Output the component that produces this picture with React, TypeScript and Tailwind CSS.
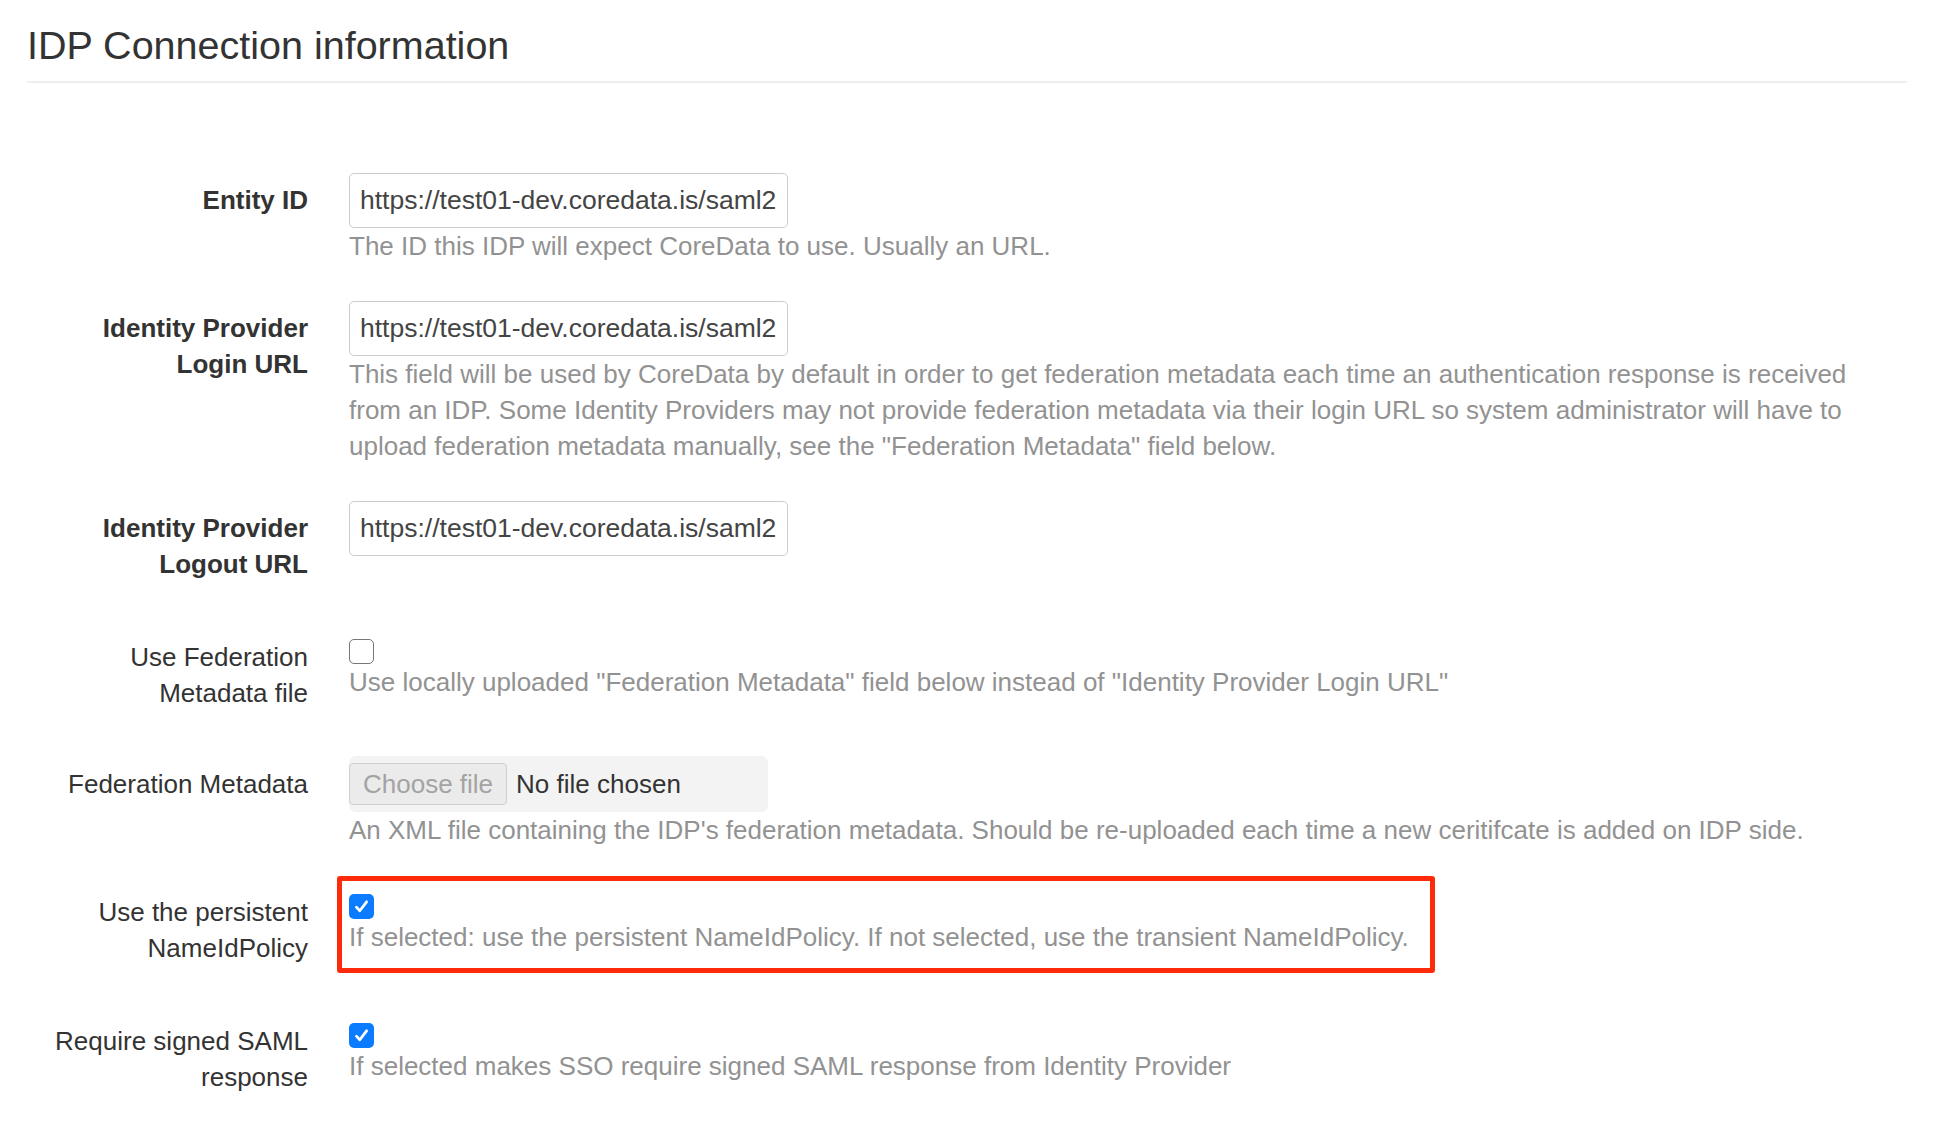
import React from 'react';

const FONT = { fontFamily: '"Liberation Sans", Arial, Helvetica, sans-serif' };

const Checkbox = ({ checked }: { checked?: boolean }) =>
  checked ? (
    <span className="flex h-[25px] w-[25px] items-center justify-center rounded-[5px] bg-[#0b7bff]">
      <svg viewBox="0 0 16 16" className="h-[17px] w-[17px]" fill="none">
        <path d="M3.2 8.6 6.4 12 12.8 3.6" stroke="white" strokeWidth="2.6" strokeLinecap="round" strokeLinejoin="round" />
      </svg>
    </span>
  ) : (
    <span className="block h-[25px] w-[25px] rounded-[5px] border-[1.5px] border-[#777] bg-white" />
  );

const TextInput = ({ value }: { value: string }) => (
  <div className="flex h-[55px] w-[439px] items-center overflow-hidden whitespace-nowrap rounded-[5px] border-[1.5px] border-[#cdcdcd] bg-white pl-[10px] text-[26.5px] text-[#444]">
    {value}
  </div>
);

const Help = ({ children }: { children: React.ReactNode }) => (
  <p className="leading-[36px] text-[#929292]">{children}</p>
);

const Row = ({
  label,
  bold,
  labelPad,
  className,
  children,
}: {
  label: React.ReactNode;
  bold?: boolean;
  labelPad: string;
  className: string;
  children: React.ReactNode;
}) => (
  <div className={`flex ${className}`}>
    <label className={`w-[322px] shrink-0 pr-[41px] text-right leading-[36px] text-[#333] ${bold ? 'font-bold' : ''} ${labelPad}`}>
      {label}
    </label>
    <div className="min-w-0 flex-1">{children}</div>
  </div>
);

export default function App() {
  const url = 'https://test01-dev.coredata.is/saml2';

  return (
    <div className="min-h-screen bg-white pl-[27px] pr-[47px] text-[26px]" style={FONT}>
      <h1 className="border-b-2 border-[#eeeeee] pt-[23px] pb-[14px] text-[39.5px] leading-[44px] text-[#333]">
        IDP Connection information
      </h1>

      <form>
        <Row label="Entity ID" bold labelPad="pt-[9px]" className="mt-[90px]">
          <TextInput value={url} />
          <Help>The ID this IDP will expect CoreData to use. Usually an URL.</Help>
        </Row>

        <Row label={<>Identity Provider<br />Login URL</>} bold labelPad="pt-[9px]" className="mt-[37px]">
          <TextInput value={url} />
          <Help>
            This field will be used by CoreData by default in order to get federation metadata each time an authentication response is received
            <br />
            from an IDP. Some Identity Providers may not provide federation metadata via their login URL so system administrator will have to
            <br />
            upload federation metadata manually, see the "Federation Metadata" field below.
          </Help>
        </Row>

        <Row label={<>Identity Provider<br />Logout URL</>} bold labelPad="pt-[9px]" className="mt-[37px]">
          <TextInput value={url} />
        </Row>

        <Row label={<>Use Federation<br />Metadata file</>} labelPad="pt-0" className="mt-[57px]">
          <Checkbox />
          <Help>Use locally uploaded "Federation Metadata" field below instead of "Identity Provider Login URL"</Help>
        </Row>

        <Row label="Federation Metadata" labelPad="pt-[10px]" className="mt-[45px]">
          <div className="flex h-[56px] w-[419px] items-center rounded-[7px] bg-[#f3f3f3]">
            <span className="flex h-[42px] items-center rounded-[4px] border-[1.5px] border-[#cfcfcf] bg-[#ebebeb] px-[13px] text-[#a3a3a3]">
              Choose file
            </span>
            <span className="pl-[9px] text-[#333]">No file chosen</span>
          </div>
          <Help>An XML file containing the IDP's federation metadata. Should be re-uploaded each time a new ceritifcate is added on IDP side.</Help>
        </Row>

        <Row label={<>Use the persistent<br />NameIdPolicy</>} labelPad="pt-[18px]" className="mt-[28px]">
          <div className="-ml-[12px] w-[1098px] rounded-[3px] border-[5px] border-[#ff2a0a] pt-[13px] pb-[13px] pl-[7px]">
            <Checkbox checked />
            <Help>If selected: use the persistent NameIdPolicy. If not selected, use the transient NameIdPolicy.</Help>
          </div>
        </Row>

        <Row label={<>Require signed SAML<br />response</>} labelPad="pt-0" className="mt-[50px]">
          <Checkbox checked />
          <Help>If selected makes SSO require signed SAML response from Identity Provider</Help>
        </Row>
      </form>
    </div>
  );
}
